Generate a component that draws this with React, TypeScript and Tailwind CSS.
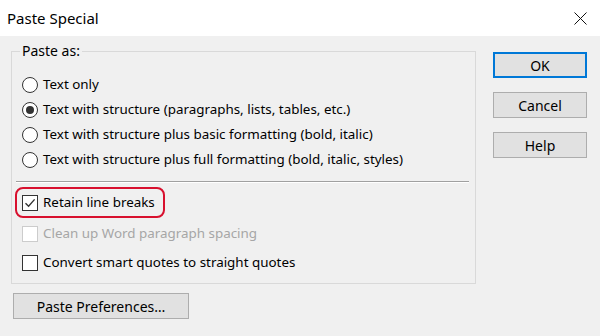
import { ReactNode } from "react";

function Radio({ checked }: { checked?: boolean }) {
  return (
    <div className="w-[16px] h-[16px] rounded-full border border-[#333333] bg-white flex items-center justify-center shrink-0">
      {checked && <div className="w-[8px] h-[8px] rounded-full bg-[#333333]" />}
    </div>
  );
}

function Checkbox({ checked, disabled }: { checked?: boolean; disabled?: boolean }) {
  return (
    <div
      className={`w-[16px] h-[16px] border bg-white flex items-center justify-center shrink-0 ${
        disabled ? "border-[#cccccc]" : "border-[#333333]"
      }`}
    >
      {checked && (
        <svg width="12" height="12" viewBox="0 0 12 12">
          <path d="M1.5 6.2 L4.6 9.3 L10.6 2.4" fill="none" stroke="#333333" strokeWidth="1.4" />
        </svg>
      )}
    </div>
  );
}

function RadioRow({ checked, children }: { checked?: boolean; children: ReactNode }) {
  return (
    <div className="h-[25px] flex items-center gap-[5px] pl-[10px]">
      <Radio checked={checked} />
      <span>{children}</span>
    </div>
  );
}

function DialogButton({ children, primary, className = "" }: { children: ReactNode; primary?: boolean; className?: string }) {
  return (
    <button
      type="button"
      className={`h-[26px] bg-[#e1e1e1] flex items-center justify-center text-[14px] ${
        primary ? "border-2 border-[#0078d7]" : "border border-[#adadad]"
      } ${className}`}
    >
      {children}
    </button>
  );
}

export default function App() {
  return (
    <div className="w-[600px] h-[336px] bg-[#f0f0f0] font-['Noto_Sans',sans-serif] text-[13.4px] text-black overflow-hidden">
      <div className="h-[36px] bg-white flex items-center justify-between pl-[7px] pr-[13px]">
        <span className="text-[15px]">Paste Special</span>
        <svg width="13" height="13" viewBox="0 0 13 13">
          <path d="M0.5 0.5 L12.5 12.5 M12.5 0.5 L0.5 12.5" stroke="#111111" strokeWidth="1" />
        </svg>
      </div>

      <div className="flex pl-[11px] pt-[15px]">
        <div className="w-[465px] flex flex-col">
          <div className="relative h-[233px] border border-[#d9d9d9] flex flex-col pt-[20px]">
            <span className="absolute -top-[11px] left-[8px] px-[2px] bg-[#f0f0f0] leading-[20px] text-[14px]">Paste as:</span>
            <RadioRow>Text only</RadioRow>
            <RadioRow checked>Text with structure (paragraphs, lists, tables, etc.)</RadioRow>
            <RadioRow>Text with structure plus basic formatting (bold, italic)</RadioRow>
            <RadioRow>Text with structure plus full formatting (bold, italic, styles)</RadioRow>

            <div className="mt-[9px] ml-[4px] mr-[6px] h-[2px] border-t border-[#a0a0a0] border-b border-b-white" />

            <div className="mt-[4px] ml-[3px] w-[150px] h-[31px] border-2 border-[#d8102e] rounded-[8px] flex items-center gap-[5px] pl-[5px]">
              <Checkbox checked />
              <span>Retain line breaks</span>
            </div>
            <div className="mt-[1px] h-[29px] flex items-center gap-[5px] pl-[10px] text-[#a6a6a6]">
              <Checkbox disabled />
              <span>Clean up Word paragraph spacing</span>
            </div>
            <div className="h-[29px] flex items-center gap-[5px] pl-[10px]">
              <Checkbox />
              <span>Convert smart quotes to straight quotes</span>
            </div>
          </div>

          <DialogButton className="mt-[9px] ml-[2px] w-[176px]">Paste Preferences…</DialogButton>
        </div>

        <div className="ml-[17px] pt-[1px] flex flex-col gap-[14px]">
          <DialogButton primary className="w-[94px]">OK</DialogButton>
          <DialogButton className="w-[94px]">Cancel</DialogButton>
          <DialogButton className="w-[94px]">Help</DialogButton>
        </div>
      </div>
    </div>
  );
}
